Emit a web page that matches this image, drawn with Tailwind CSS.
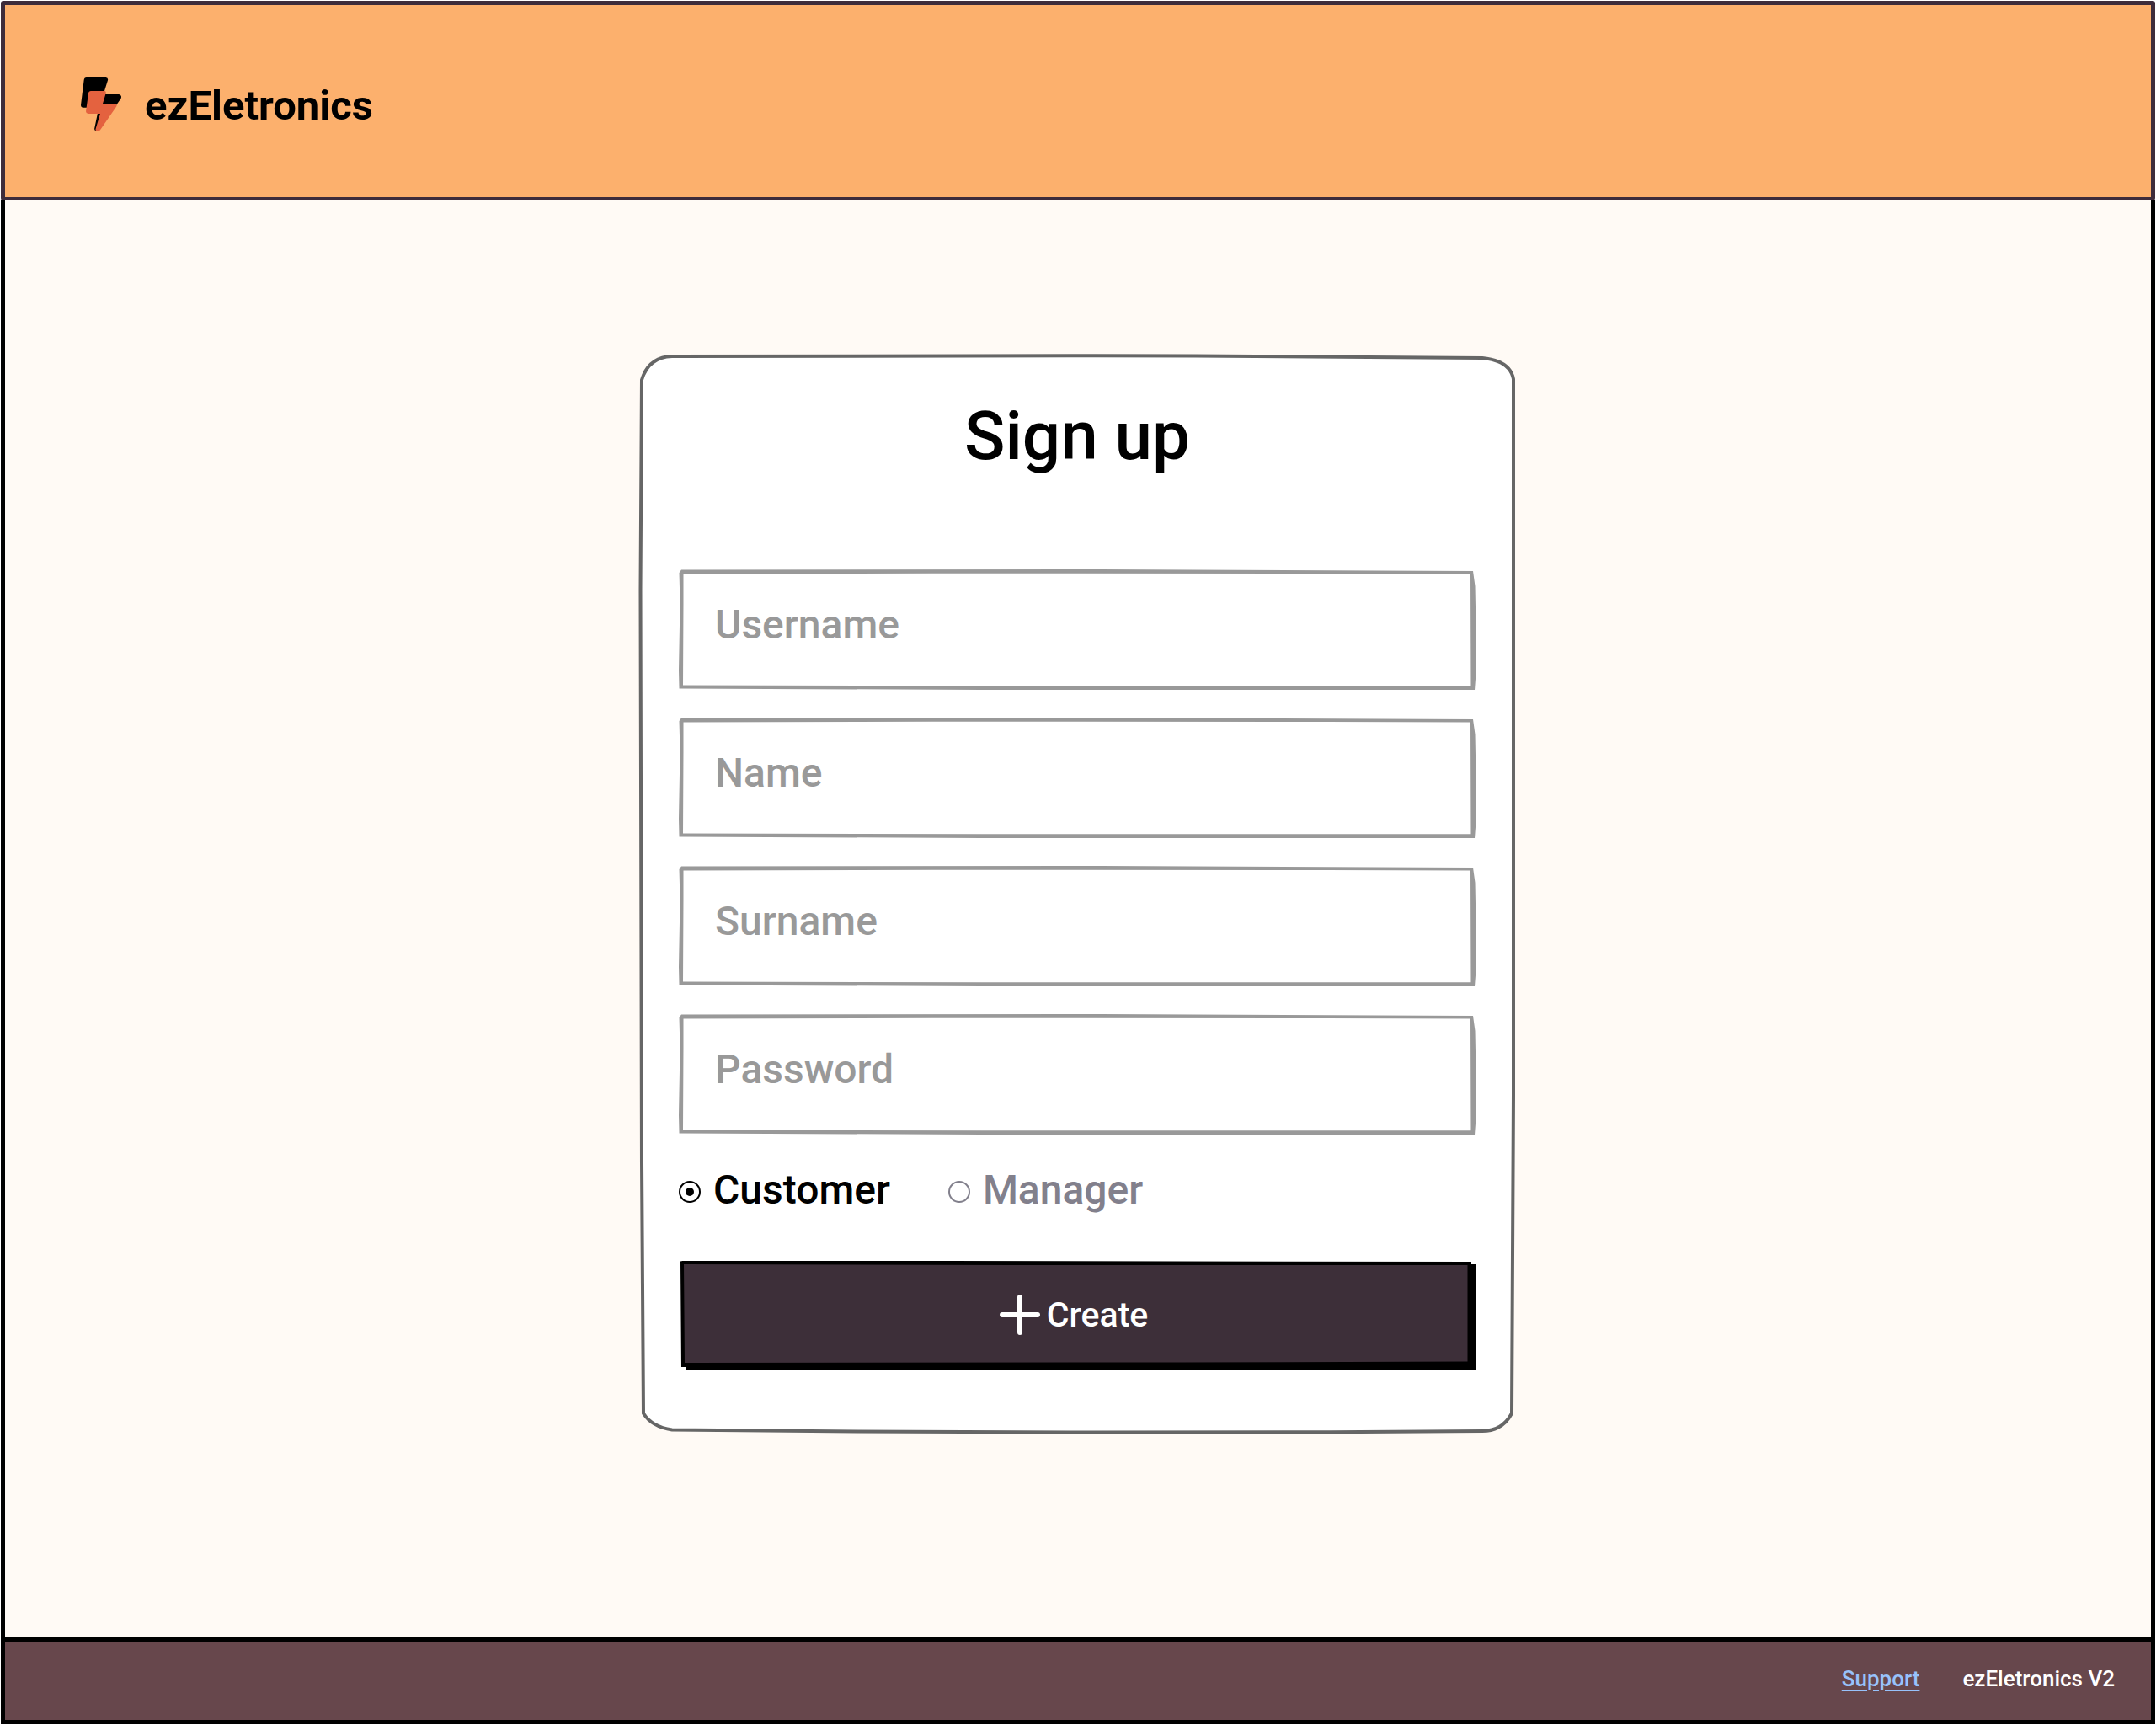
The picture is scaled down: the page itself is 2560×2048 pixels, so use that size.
<!DOCTYPE html>
<html lang="en">
<head>
<meta charset="utf-8">
<meta name="viewport" content="width=device-width, initial-scale=1">
<title>ezEletronics - Sign up</title>
<script src="https://cdn.jsdelivr.net/npm/@tailwindcss/browser@4"></script>
</head>
<body class="flex min-h-screen flex-col bg-white p-px font-['Roboto','Liberation_Sans',sans-serif] font-medium text-black">

<!-- Hand-drawn outline shared by every text field -->
<svg class="hidden" aria-hidden="true">
  <symbol id="field-outline" viewBox="0 0 946 143" preserveAspectRatio="none">
    <path fill="#999" fill-rule="evenodd" d="M3 .5L500 0L943 2L945.5 20L946 45L946 130L945 143L360 143L.5 141.500L0 120L1.500 40L.5 4ZM5.500 5.500L300 4.700L770 5L940 5.500L940.500 138.300L360 138.300L5 137.500L5.500 40Z"/>
  </symbol>
</svg>

<header class="flex h-[237px] items-center gap-7 rounded-[3px] border-[5px] border-b-4 border-[#3d2c3b] bg-[#fcb06d] pt-2 pl-[90px]">
  <svg class="h-16 w-12" viewBox="48 36 144 192" aria-hidden="true">
    <path fill="#000" d="M68 36H137Q146 37 144 46L132 84L136 96H184Q195 99 191 110L116 218Q108 230 100 226Q95 222 97 215L112 143H57Q48 143 48 134L59 45Q60 36 68 36Z"/>
    <path fill="#e4623f" d="M84 84H132Q139 85 137 92L126 129H168Q178 131 175 139L118 221Q112 230 104 228Q99 226 101 218L117 165H74Q66 164 66 157L75 92Q76 84 84 84Z"/>
  </svg>
  <span class="pt-1 text-[49px] leading-[56px] font-bold">ezEletronics</span>
</header>

<main class="flex flex-1 items-start justify-center border-x-[5px] border-black bg-[#fffaf5] pt-[183px] pb-[241px]">
  <form class="relative isolate flex w-full max-w-[1038px] flex-col pt-[49px] pr-[47px] pb-[75px] pl-[45px]">
    <svg class="absolute inset-0 -z-10 h-full w-full" viewBox="761 421 1038 1281" preserveAspectRatio="none" overflow="visible" aria-hidden="true">
      <path fill="#fff" stroke="#666" stroke-width="4" vector-effect="non-scaling-stroke" d="M762 451Q770 424 798 423L1300 422.300L1420 422.500L1760 425Q1793 428 1797 450L1797 1300L1795 1678Q1784 1699 1760 1699L1580 1700.300L1300 1700.500L1018 1699.500L798 1697.500Q774 1694 764 1678L762 1380L760.500 700Z"/>
    </svg>

    <h1 class="text-center text-[80px] leading-[96px]">Sign up</h1>

    <div class="mt-[110px] flex flex-col gap-[33px]">
      <div class="relative h-[143px]">
        <svg class="absolute inset-0 h-full w-full" aria-hidden="true"><use href="#field-outline"/></svg>
        <input type="text" name="username" aria-label="Username" placeholder="Username" class="relative h-full w-full bg-transparent px-[43px] pb-3 text-[48px] leading-[56px] placeholder:text-[#999] placeholder:opacity-100 outline-none">
      </div>
      <div class="relative h-[143px]">
        <svg class="absolute inset-0 h-full w-full" aria-hidden="true"><use href="#field-outline"/></svg>
        <input type="text" name="name" aria-label="Name" placeholder="Name" class="relative h-full w-full bg-transparent px-[43px] pb-3 text-[48px] leading-[56px] placeholder:text-[#999] placeholder:opacity-100 outline-none">
      </div>
      <div class="relative h-[143px]">
        <svg class="absolute inset-0 h-full w-full" aria-hidden="true"><use href="#field-outline"/></svg>
        <input type="text" name="surname" aria-label="Surname" placeholder="Surname" class="relative h-full w-full bg-transparent px-[43px] pb-3 text-[48px] leading-[56px] placeholder:text-[#999] placeholder:opacity-100 outline-none">
      </div>
      <div class="relative h-[143px]">
        <svg class="absolute inset-0 h-full w-full" aria-hidden="true"><use href="#field-outline"/></svg>
        <input type="password" name="password" aria-label="Password" placeholder="Password" class="relative h-full w-full bg-transparent px-[43px] pb-3 text-[48px] leading-[56px] placeholder:text-[#999] placeholder:opacity-100 outline-none">
      </div>
    </div>

    <div class="mt-[38px] flex gap-[69px] text-[48px] leading-[56px]">
      <label class="flex items-center gap-[15px]">
        <input type="radio" name="role" value="customer" checked class="mt-1 grid size-[26px] appearance-none place-content-center rounded-full border-2 border-black before:size-2.5 before:rounded-full checked:before:bg-black">
        Customer
      </label>
      <label class="flex items-center gap-[15px] text-[#82808c]">
        <input type="radio" name="role" value="manager" class="mt-1 grid size-[26px] appearance-none place-content-center rounded-full border-2 border-[#82808c] before:size-2.5 before:rounded-full checked:before:bg-[#82808c]">
        Manager
      </label>
    </div>

    <button type="submit" class="relative isolate mt-[56px] flex h-[130px] items-center justify-center gap-2 pr-2 pb-0.5 text-[41px] leading-[48px] text-white">
      <svg class="absolute inset-0 -z-10 h-full w-full" viewBox="806 1497 946 130" preserveAspectRatio="none" aria-hidden="true">
        <path fill="#000" d="M808 1497.500L813 1496.500L1747 1498L1747 1501L1752 1501L1752 1626.500L1200 1626.500L814 1627.500L814 1623L809 1623Z"/>
        <path fill="#3d2f39" d="M812 1501L1200 1502L1742.500 1502L1742.500 1616.500L1400 1617.500L813 1618Z"/>
      </svg>
      <svg class="size-12" viewBox="0 0 48 48" fill="none" stroke="currentColor" stroke-width="6" stroke-linecap="round" aria-hidden="true">
        <path d="M24 3V45M3 24H45"/>
      </svg>
      Create
    </button>
  </form>
</main>

<footer class="flex h-[104px] items-start justify-end gap-[51px] border-[5px] border-t-[6px] border-black bg-[#67474c] pt-7 pr-[43px] text-[26px] leading-[32px] text-white">
  <a href="#support" class="text-[#97c2fb] underline decoration-2 underline-offset-4">Support</a>
  <span>ezEletronics V2</span>
</footer>
</body>
</html>
